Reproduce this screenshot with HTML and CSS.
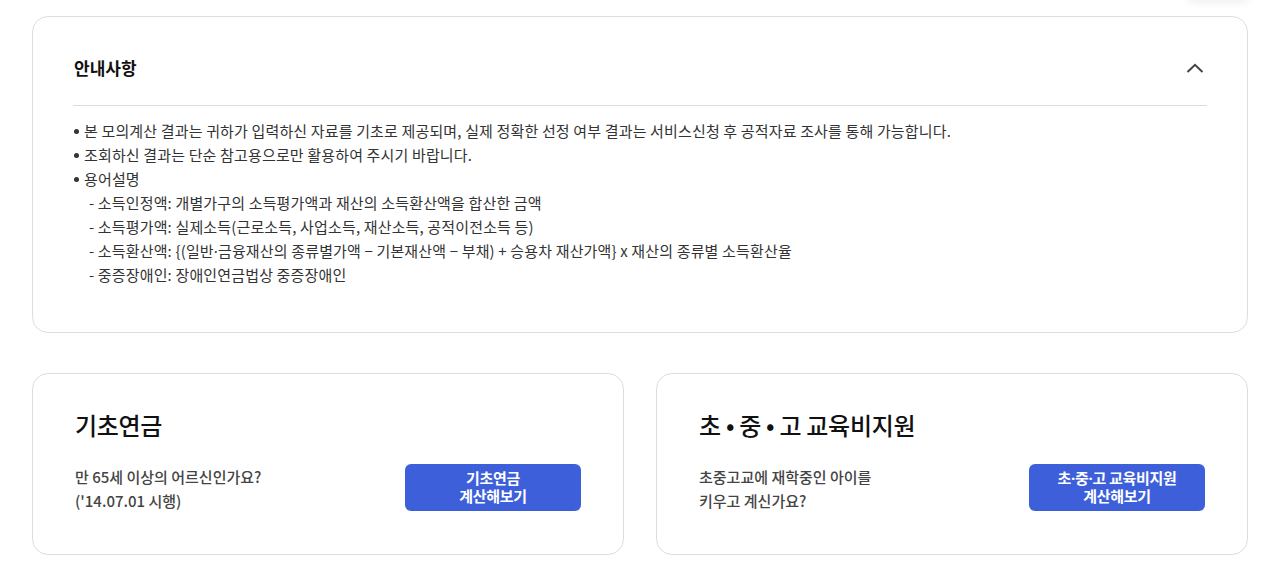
FILE: index.html
```html
<html>
<head>
    <title>모의계산</title>
    <link rel="stylesheet" href="styles.css">
</head>
<body>
    <div id="page">
        <div class="topshade"></div>

        <div class="notice">
            <div class="notice_head">
                <p class="notice_title">안내사항</p>
                <svg class="chevron" width="18" height="10" viewBox="0 0 18 10">
                    <path d="M1.5 9 L9 1.8 L16.5 9" fill="none" stroke="#444" stroke-width="2"/>
                </svg>
            </div>
            <ul class="notice_list">
                <li>본 모의계산 결과는 귀하가 입력하신 자료를 기초로 제공되며, 실제 정확한 선정 여부 결과는 서비스신청 후 공적자료 조사를 통해 가능합니다.</li>
                <li>조회하신 결과는 단순 참고용으로만 활용하여 주시기 바랍니다.</li>
                <li>용어설명
                    <ul class="terms">
                        <li>- 소득인정액: 개별가구의 소득평가액과 재산의 소득환산액을 합산한 금액</li>
                        <li>- 소득평가액: 실제소득(근로소득, 사업소득, 재산소득, 공적이전소득 등)</li>
                        <li>- 소득환산액: {(일반<span class="dot">·</span>금융재산의 종류별가액 − 기본재산액 − 부채) + 승용차 재산가액} x 재산의 종류별 소득환산율</li>
                        <li>- 중증장애인: 장애인연금법상 중증장애인</li>
                    </ul>
                </li>
            </ul>
        </div>

        <div class="cards">
            <div class="card">
                <p class="card_title">기초연금</p>
                <div class="card_row">
                    <p class="card_txt">만 65세 이상의 어르신인가요?<br>('14.07.01 시행)</p>
                    <a class="calc_btn" href="#"><span>기초연금<br>계산해보기</span></a>
                </div>
            </div>
            <div class="card">
                <p class="card_title">초 • 중 • 고 교육비지원</p>
                <div class="card_row">
                    <p class="card_txt">초중고교에 재학중인 아이를<br>키우고 계신가요?</p>
                    <a class="calc_btn" href="#"><span>초<span class="dot">·</span>중<span class="dot">·</span>고 교육비지원<br>계산해보기</span></a>
                </div>
            </div>
        </div>
    </div>
</body>
</html>
```

FILE: styles.css
```css
        body {
            margin: 0;
            background-color: #fff;
            color: #222;
            font-family: "Noto Sans CJK KR", "Noto Sans", sans-serif;
        }

        p {
            margin: 0;
        }

        #page {
            position: relative;
            padding: 16px 33px 0 32px;
        }

        .topshade {
            position: absolute;
            top: -10px;
            right: 33px;
            width: 60px;
            height: 10px;
            box-shadow: 0 2px 10px rgba(0, 0, 0, 0.07);
        }

        .dot {
            font-family: "Noto Sans", sans-serif;
        }

        .notice {
            border: 1px solid #dedede;
            border-radius: 16px;
            padding: 0 40px 45px 40px;
        }

        .notice_head {
            display: flex;
            justify-content: space-between;
            align-items: center;
            padding: 39px 0 25px 0;
            border-bottom: 1px solid #ddd;
        }

            .notice_title {
                font-size: 17px;
                font-weight: 700;
                line-height: 24px;
                color: #111;
                padding-left: 1px;
            }

            .chevron {
                margin-right: 3px;
            }

        .notice_list {
            list-style: none;
            margin: 0;
            padding: 13px 0 0 0;
            font-size: 15px;
            line-height: 24px;
            color: #333;
            letter-spacing: 0.15px;
        }

            .notice_list > li {
                position: relative;
                padding-left: 11px;
            }

                .notice_list > li::before {
                    content: "";
                    position: absolute;
                    left: 1px;
                    top: 10px;
                    width: 5px;
                    height: 5px;
                    border-radius: 50%;
                    background-color: #333;
                }

        .terms {
            list-style: none;
            margin: 0;
            padding: 0 0 0 5px;
        }

        .cards {
            display: grid;
            grid-template-columns: 1fr 1fr;
            gap: 32px;
            margin-top: 40px;
        }

        .card {
            border: 1px solid #dedede;
            border-radius: 16px;
            height: 180px;
            padding: 0 42px;
        }

            .card_title {
                font-size: 24px;
                font-weight: 500;
                color: #111;
                margin-top: 33px;
                letter-spacing: -0.3px;
            }

            .card_row {
                display: flex;
                justify-content: space-between;
                align-items: center;
                margin-top: 19px;
            }

            .card_txt {
                font-size: 15px;
                font-weight: 500;
                line-height: 24px;
                color: #444;
                padding-top: 4px;
            }

            .calc_btn {
                display: flex;
                align-items: center;
                justify-content: center;
                width: 176px;
                height: 47px;
                border-radius: 6px;
                background-color: #3d5fd9;
                color: #fff;
                font-size: 15px;
                font-weight: 700;
                line-height: 18px;
                text-align: center;
                text-decoration: none;
                letter-spacing: -0.3px;
            }
```
